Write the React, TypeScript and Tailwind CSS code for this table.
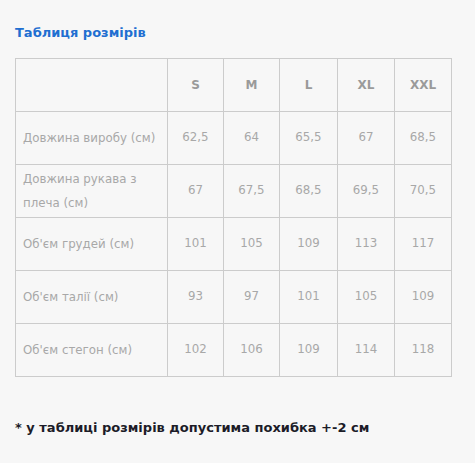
import React from "react";

const sizes = ["S", "M", "L", "XL", "XXL"];
const rows: { label: string; values: string[] }[] = [
  { label: "Довжина виробу (см)", values: ["62,5", "64", "65,5", "67", "68,5"] },
  { label: "Довжина рукава з плеча (см)", values: ["67", "67,5", "68,5", "69,5", "70,5"] },
  { label: "Об'єм грудей (см)", values: ["101", "105", "109", "113", "117"] },
  { label: "Об'єм талії (см)", values: ["93", "97", "101", "105", "109"] },
  { label: "Об'єм стегон (см)", values: ["102", "106", "109", "114", "118"] },
];

const colW = ["w-[56px]", "w-[56px]", "w-[58px]", "w-[57px]", "w-[57px]"];

export default function App() {
  return (
    <div
      className="w-[475px] h-[463px] bg-[#f7f7f7] pl-[15px] pt-[23px]"
      style={{ fontFamily: '"DejaVu Sans", sans-serif' }}
    >
      <h2 className="text-[13px] leading-[20px] font-bold text-[#1f6fd1]">Таблиця розмірів</h2>
      <table className="mt-[15px] w-[437px] table-fixed border-collapse text-[11.8px] text-[#a8a8a8]">
        <colgroup>
          <col className="w-[152px]" />
          {colW.map((c, i) => (
            <col key={i} className={c} />
          ))}
        </colgroup>
        <thead>
          <tr className="h-[53px]">
            <th className="border border-[#cccccc]"></th>
            {sizes.map((s) => (
              <th key={s} className="border border-[#cccccc] font-bold text-[12px] text-[#9a9a9a] text-center">
                {s}
              </th>
            ))}
          </tr>
        </thead>
        <tbody>
          {rows.map((r) => (
            <tr key={r.label} className="h-[53px]">
              <td className="border border-[#cccccc] pl-[7px] pr-[4px] text-left leading-[24px]">{r.label}</td>
              {r.values.map((v, i) => (
                <td key={i} className="border border-[#cccccc] text-center">
                  {v}
                </td>
              ))}
            </tr>
          ))}
        </tbody>
      </table>
      <p className="mt-[41px] text-[13px] leading-[20px] font-bold text-[#1c1c28]">
        * у таблиці розмірів допустима похибка +-2 см
      </p>
    </div>
  );
}
